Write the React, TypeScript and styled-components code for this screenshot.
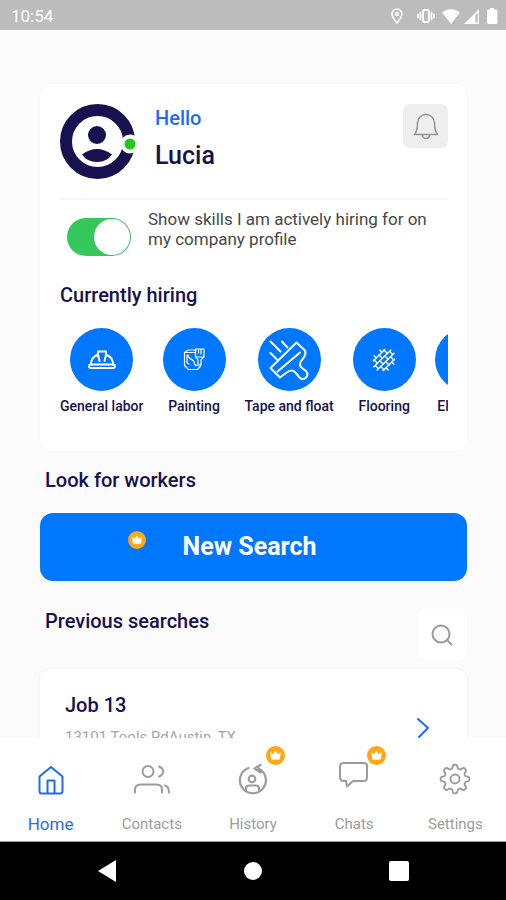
import React, { useState } from "react";
import styled, { createGlobalStyle } from "styled-components";

const color = {
  navy: "#17124f",
  blue: "#0077ff",
  link: "#1f6bf5",
  grey: "#9c9c9c",
  orange: "#ffa714",
  page: "#fbfbfb",
};

const GlobalStyle = createGlobalStyle`
  *, *::before, *::after { box-sizing: border-box; }
  body { margin: 0; background: ${color.page}; font-family: Roboto, "Liberation Sans", sans-serif; }
  h1, h2, h3, p, ul { margin: 0; padding: 0; }
  button { border: 0; padding: 0; font: inherit; cursor: pointer; }
  a { color: inherit; text-decoration: none; }
  svg { display: block; }
`;

const Screen = styled.div`
  display: flex;
  flex-direction: column;
  height: 100vh;
  background: ${color.page};
`;

const StatusBar = styled.header`
  display: flex;
  flex: none;
  align-items: center;
  justify-content: space-between;
  height: 30px;
  padding: 2px 6px 0 11px;
  background: #bcbcbc;
  color: #fff;
  font-size: 17px;
  line-height: 20px;
`;

const StatusIcons = styled.div`
  display: flex;
  align-items: center;
  gap: 4px;
`;

const StatusGroup = styled.div`
  display: flex;
  align-items: center;
  gap: 14px;
  margin-right: 3px;
`;

const Content = styled.main`
  flex: 1;
  min-height: 0;
  overflow: hidden;
  padding: 54px 39px 0 40px;
`;

const ProfileCard = styled.section`
  padding: 20px 19px 36px 20px;
  border-radius: 12px;
  background: #fff;
  box-shadow: 0 0 4px rgba(0, 0, 0, 0.02);
`;

const ProfileHead = styled.div`
  display: flex;
  align-items: flex-start;
  gap: 19px;
  padding-bottom: 19px;
  border-bottom: 2px solid #f6f6f6;
`;

const Greeting = styled.div`
  flex: 1;
  padding-top: 2px;
`;

const Hello = styled.p`
  color: ${color.link};
  font-size: 20px;
  font-weight: 500;
  line-height: 24px;
`;

const UserName = styled.h1`
  margin-top: 10px;
  color: ${color.navy};
  font-size: 25px;
  font-weight: 500;
  line-height: 32px;
`;

const BellButton = styled.button`
  display: grid;
  place-items: center;
  width: 45px;
  height: 44px;
  border-radius: 7px;
  background: #eee;
  color: #929292;
`;

const ToggleRow = styled.div`
  display: flex;
  align-items: flex-start;
  gap: 17px;
  padding: 9px 0 0 7px;
`;

const Toggle = styled.input`
  appearance: none;
  display: flex;
  flex: none;
  align-items: center;
  width: 64px;
  height: 38px;
  margin: 9px 0 0;
  padding: 0 1px;
  border-radius: 19px;
  background: #cfcfcf;
  cursor: pointer;

  &::before {
    content: "";
    width: 36px;
    height: 36px;
    border-radius: 50%;
    background: #fff;
  }

  &:checked {
    justify-content: flex-end;
    background: #34c759;
  }
`;

const ToggleLabel = styled.label`
  color: #484848;
  font-size: 17px;
  line-height: 20px;
`;

const Heading = styled.h2`
  color: ${color.navy};
  font-size: 20px;
  font-weight: 500;
  line-height: 24px;
`;

const HiringHeading = styled(Heading)`
  margin-top: 27px;
`;

const SkillList = styled.ul`
  display: flex;
  gap: 19px;
  margin-top: 21px;
  overflow: hidden;
  list-style: none;
`;

const SkillItem = styled.li`
  display: flex;
  flex: none;
  flex-direction: column;
  align-items: center;
  gap: 6px;
  color: ${color.navy};
  font-size: 14px;
  font-weight: 500;
  line-height: 18px;
`;

const SkillCircle = styled.span`
  display: grid;
  place-items: center;
  width: 63px;
  height: 63px;
  border-radius: 50%;
  background: ${color.blue};
  color: #fff;
`;

const SearchSection = styled.section`
  padding-top: 17px;
`;

const SectionHeading = styled(Heading)`
  padding-left: 5px;
`;

const SearchButton = styled.button`
  position: relative;
  width: 100%;
  height: 68px;
  margin-top: 21px;
  padding-right: 8px;
  border-radius: 13px;
  background: ${color.blue};
  color: #fff;
  font-size: 25px;
  font-weight: 700;
  line-height: 32px;
`;

const ButtonBadge = styled.span`
  position: absolute;
  top: 18px;
  left: 88px;
`;

const PreviousHead = styled.div`
  display: flex;
  align-items: flex-start;
  justify-content: space-between;
  padding-top: 28px;
`;

const FindButton = styled.button`
  display: grid;
  place-items: center;
  width: 50px;
  height: 51px;
  border-radius: 8px;
  background: #fff;
  color: ${color.grey};
`;

const JobCard = styled.a`
  display: flex;
  align-items: center;
  justify-content: space-between;
  margin-top: 9px;
  padding: 24px 38px 24px 25px;
  border-radius: 12px;
  background: #fff;
  box-shadow: 0 0 4px rgba(0, 0, 0, 0.06);
  color: ${color.link};
`;

const JobText = styled.div`
  padding-bottom: 16px;
`;

const JobAddress = styled.p`
  margin-top: 10px;
  color: #a6a6a6;
  font-size: 15px;
  line-height: 20px;
`;

const TabBar = styled.nav`
  display: grid;
  flex: none;
  grid-template-columns: repeat(5, 1fr);
  height: 104px;
  border-bottom: 1px solid #9b9b9b;
  background: #fff;
`;

const Tab = styled.a<{ $active?: boolean }>`
  display: flex;
  flex-direction: column;
  align-items: center;
  padding-top: 22px;
  color: ${(p) => (p.$active ? color.link : color.grey)};
  font-size: ${(p) => (p.$active ? 17 : 15)}px;
  line-height: 20px;
`;

const TabIcon = styled.span`
  position: relative;
  margin-bottom: 14px;
`;

const TabBadge = styled.span`
  position: absolute;
  top: -14px;
  right: -12px;
`;

const SystemBar = styled.footer`
  display: flex;
  flex: none;
  align-items: center;
  justify-content: center;
  gap: 98px;
  height: 58px;
  background: #000;
`;

const SystemButton = styled.button`
  display: grid;
  place-items: center;
  width: 48px;
  height: 48px;
  background: transparent;
`;

const line = { fill: "none", stroke: "currentColor", strokeLinecap: "round", strokeLinejoin: "round" } as const;

const Crown = ({ size }: { size: number }) => (
  <svg width={size} height={size} viewBox="0 0 20 20" aria-hidden="true">
    <circle cx="10" cy="10" r="10" fill={color.orange} />
    <path d="M4.8 7 7.6 9 10 5.3 12.4 9 15.2 7 14.2 14H5.8Z" fill="#fff" stroke="#fff" strokeWidth="0.6" strokeLinejoin="round" />
  </svg>
);

const PinIcon = () => (
  <svg width="12" height="16" viewBox="0 0 12 16" aria-hidden="true" {...line} strokeWidth="1.5">
    <path d="M6 15C3.5 11.5 1 9 1 6a5 5 0 0 1 10 0c0 3-2.500 5.500-5 9Z" />
    <circle cx="6" cy="6" r="1.500" />
  </svg>
);

const VibrateIcon = () => (
  <svg width="18" height="14" viewBox="0 0 18 14" aria-hidden="true" {...line} strokeWidth="1.8">
    <rect x="6" y="1" width="6" height="12" rx="1" />
    <path d="M3.500 3.500v7M14.500 3.500v7M1 5.500v3M17 5.500v3" />
  </svg>
);

const WifiIcon = () => (
  <svg width="18" height="15" viewBox="0 0 18 15" fill="#fff" aria-hidden="true">
    <path d="M9 15 0 3.500C5-1 13-1 18 3.500Z" />
  </svg>
);

const SignalIcon = () => (
  <svg width="16" height="15" viewBox="0 0 16 15" fill="#fff" aria-hidden="true">
    <path fillRule="evenodd" d="M15 0v15H0ZM11.500 6v7.500H13.700V3.800Z" />
  </svg>
);

const BatteryIcon = () => (
  <svg width="16" height="16" viewBox="0 0 16 16" fill="#fff" aria-hidden="true">
    <path d="M6 0h4v1.500h2q1.500 0 1.500 1.500v11.500q0 1.500-1.500 1.500H4.500Q3 16 3 14.500V3q0-1.500 1.500-1.500H6Z" />
  </svg>
);

const Avatar = () => (
  <svg width="76" height="75" viewBox="0 0 76 75" role="img" aria-label="Lucia">
    <circle cx="37.500" cy="37.500" r="31.500" fill="none" stroke={color.navy} strokeWidth="12" />
    <circle cx="37" cy="31" r="9" fill={color.navy} />
    <path d="M22 50.500Q37 39.500 52 50.500 47 58 37 58T22 50.500Z" fill={color.navy} />
    <circle cx="70" cy="40" r="9.500" fill="#fff" />
    <circle cx="70" cy="40" r="5.500" fill="#1fc71f" />
  </svg>
);

const BellIcon = () => (
  <svg width="26" height="28" viewBox="0 0 26 28" aria-hidden="true" {...line} strokeWidth="1.500">
    <path d="M1.500 22.500C3.500 20 4.500 18 4.500 11a8.500 8.500 0 0 1 17 0c0 7 1 9 3 11.500ZM9.500 23a3.500 3.500 0 0 0 7 0" />
  </svg>
);

const HelmetIcon = () => (
  <svg width="28" height="20" viewBox="0 0 28 20" aria-hidden="true" {...line} strokeWidth="1.900">
    <rect x="1" y="14.500" width="26" height="3.500" rx="1.500" />
    <path d="M3 14.500c0-5 3-8.500 7-10M25 14.500c0-5-3-8.500-7-10M11.500 11 10 4.500V1.500h8v3L16.500 11" />
  </svg>
);

const PaintIcon = () => (
  <svg width="22" height="23" viewBox="0 0 22 23" aria-hidden="true" {...line} strokeWidth="1.200">
    <path d="M1.500 4.500v13l4 4h9l3-3.500M1.500 4.500 5 2h8M1.500 4.500h10M4 7v8l2 1M12.500 1h8.500v8H12.500ZM15.500 1v4M18 1v5M13 9l2 3v5h3v-5l2.500-3M5 7c1 6 5 3 6 7s2 4 4 3" />
  </svg>
);

const TrowelIcon = () => (
  <svg width="40" height="40" viewBox="0 0 40 40" aria-hidden="true" {...line} strokeWidth="2">
    <path d="M1.500 28 27.500 2.500 35.500 10C38 13 35.500 17 32.500 20.500C30 24 30.500 26 33 28L37 31C41 36 35 41 31 38L26 32C23 29 19.500 31 17 33L11 37.500Z" />
    <path d="M8.500 31.500 31 12.500M13 1.500l5.500 6M1.500 1.500l10 10M1.500 13l7 7" />
  </svg>
);

const FloorIcon = () => (
  <svg width="24" height="24" viewBox="0 0 24 24" aria-hidden="true" {...line} strokeWidth="1.400">
    <g transform="translate(12 12) rotate(-45)">
      <path d="M-8-7H8M-12-2.300H12M-12 2.300H12M-8 7H8" />
      <path d="M-4-10V-7M4-10V-7M-7-7v4.700M0-7v4.700M7-7v4.700M-10-2.300v4.600M-3.500-2.300v4.600M3.500-2.300v4.600M10-2.300v4.600M-7 2.300V7M0 2.300V7M7 2.300V7M-4 7v3M4 7v3" />
    </g>
  </svg>
);

const BoltIcon = () => (
  <svg width="24" height="24" viewBox="0 0 24 24" aria-hidden="true" {...line} strokeWidth="1.500">
    <path d="M13 2 5 14h6l-1 8 8-12h-6Z" />
  </svg>
);

const FindIcon = () => (
  <svg width="22" height="22" viewBox="0 0 22 22" aria-hidden="true" {...line} strokeWidth="2">
    <circle cx="10" cy="10" r="8.500" />
    <path d="m16 16 4.500 4.500" />
  </svg>
);

const ChevronIcon = () => (
  <svg width="12" height="20" viewBox="0 0 12 20" aria-hidden="true" {...line} strokeWidth="2">
    <path d="m1 1 10 9-9 9" />
  </svg>
);

const HomeIcon = () => (
  <svg width="40" height="40" viewBox="0 0 40 40" aria-hidden="true" {...line} strokeWidth="2">
    <path d="M8.500 16.500 20 7l11.500 9.500V31q0 2.500-2.500 2.500H11q-2.500 0-2.500-2.500ZM16.500 33V20.500h7V33" />
  </svg>
);

const ContactsIcon = () => (
  <svg width="40" height="40" viewBox="0 0 40 40" aria-hidden="true" {...line} strokeWidth="2">
    <circle cx="16" cy="11.500" r="5.500" />
    <path d="M3 32.500v-3q0-5 6-5h15q6 0 6 5v3M27 6.500c5.500 2 5.500 8 0 10M33 25.500q4 1 4 7" />
  </svg>
);

const HistoryIcon = () => (
  <svg width="40" height="40" viewBox="0 0 40 40" aria-hidden="true" {...line} strokeWidth="2.200">
    <path d="M15.500 8A13 13 0 1 0 25.500 8.500M27.500 5 21.500 8.500 27.500 12.500M13 31v-2.500q0-3 3-3h7q3 0 3 3V31" />
    <circle cx="19" cy="19" r="3.300" />
  </svg>
);

const ChatIcon = () => (
  <svg width="40" height="40" viewBox="0 0 40 40" aria-hidden="true" {...line} strokeWidth="2">
    <path d="M10 3h20q3 0 3 3v11q0 4-3 4H19l-6 5.500-1-5.500H10q-4 0-4-4V6q0-3 4-3Z" />
  </svg>
);

const gearPath = (() => {
  const points: string[] = [];
  for (let i = 0; i <= 160; i += 1) {
    const angle = (i / 160) * Math.PI * 2;
    const radius = 12.5 + 1.9 * Math.tanh(2 * Math.cos(angle * 8));
    points.push(`${(20 + radius * Math.sin(angle)).toFixed(2)} ${(19 - radius * Math.cos(angle)).toFixed(2)}`);
  }
  return `M${points.join("L")}Z`;
})();

const SettingsIcon = () => (
  <svg width="40" height="40" viewBox="0 0 40 40" aria-hidden="true" {...line} strokeWidth="1.900">
    <path d={gearPath} />
    <circle cx="20" cy="19" r="4.500" />
  </svg>
);

const skills = [
  { name: "General labor", icon: <HelmetIcon /> },
  { name: "Painting", icon: <PaintIcon /> },
  { name: "Tape and float", icon: <TrowelIcon /> },
  { name: "Flooring", icon: <FloorIcon /> },
  { name: "Electrical", icon: <BoltIcon /> },
];

const tabs = [
  { name: "Home", icon: <HomeIcon />, active: true },
  { name: "Contacts", icon: <ContactsIcon /> },
  { name: "History", icon: <HistoryIcon />, premium: true },
  { name: "Chats", icon: <ChatIcon />, premium: true },
  { name: "Settings", icon: <SettingsIcon /> },
];

export default function App() {
  const [visible, setVisible] = useState(true);

  return (
    <Screen>
      <GlobalStyle />
      <StatusBar>
        <time>10:54</time>
        <StatusIcons>
          <StatusGroup>
            <PinIcon />
            <VibrateIcon />
          </StatusGroup>
          <WifiIcon />
          <SignalIcon />
          <BatteryIcon />
        </StatusIcons>
      </StatusBar>

      <Content>
        <ProfileCard>
          <ProfileHead>
            <Avatar />
            <Greeting>
              <Hello>Hello</Hello>
              <UserName>Lucia</UserName>
            </Greeting>
            <BellButton type="button" aria-label="Notifications">
              <BellIcon />
            </BellButton>
          </ProfileHead>
          <ToggleRow>
            <Toggle
              id="show-skills"
              type="checkbox"
              checked={visible}
              onChange={(event) => setVisible(event.target.checked)}
            />
            <ToggleLabel htmlFor="show-skills">
              Show skills I am actively hiring for on my company profile
            </ToggleLabel>
          </ToggleRow>
          <HiringHeading>Currently hiring</HiringHeading>
          <SkillList>
            {skills.map((skill) => (
              <SkillItem key={skill.name}>
                <SkillCircle>{skill.icon}</SkillCircle>
                {skill.name}
              </SkillItem>
            ))}
          </SkillList>
        </ProfileCard>

        <SearchSection>
          <SectionHeading>Look for workers</SectionHeading>
          <SearchButton type="button">
            <ButtonBadge>
              <Crown size={18} />
            </ButtonBadge>
            New Search
          </SearchButton>
        </SearchSection>

        <section>
          <PreviousHead>
            <SectionHeading>Previous searches</SectionHeading>
            <FindButton type="button" aria-label="Find a search">
              <FindIcon />
            </FindButton>
          </PreviousHead>
          <JobCard href="#job-13">
            <JobText>
              <Heading as="h3">Job 13</Heading>
              <JobAddress>13101 Tools RdAustin, TX</JobAddress>
            </JobText>
            <ChevronIcon />
          </JobCard>
        </section>
      </Content>

      <TabBar aria-label="Main">
        {tabs.map((tab) => (
          <Tab key={tab.name} href={`#${tab.name.toLowerCase()}`} $active={tab.active}>
            <TabIcon>
              {tab.icon}
              {tab.premium && (
                <TabBadge>
                  <Crown size={19} />
                </TabBadge>
              )}
            </TabIcon>
            {tab.name}
          </Tab>
        ))}
      </TabBar>

      <SystemBar>
        <SystemButton type="button" aria-label="Back">
          <svg width="18" height="22" viewBox="0 0 18 22" fill="#fff"><path d="M18 0v22L0 11Z" /></svg>
        </SystemButton>
        <SystemButton type="button" aria-label="Home screen">
          <svg width="18" height="18" viewBox="0 0 18 18" fill="#fff"><circle cx="9" cy="9" r="9" /></svg>
        </SystemButton>
        <SystemButton type="button" aria-label="Recent apps">
          <svg width="20" height="20" viewBox="0 0 20 20" fill="#fff"><rect width="20" height="20" rx="2" /></svg>
        </SystemButton>
      </SystemBar>
    </Screen>
  );
}
